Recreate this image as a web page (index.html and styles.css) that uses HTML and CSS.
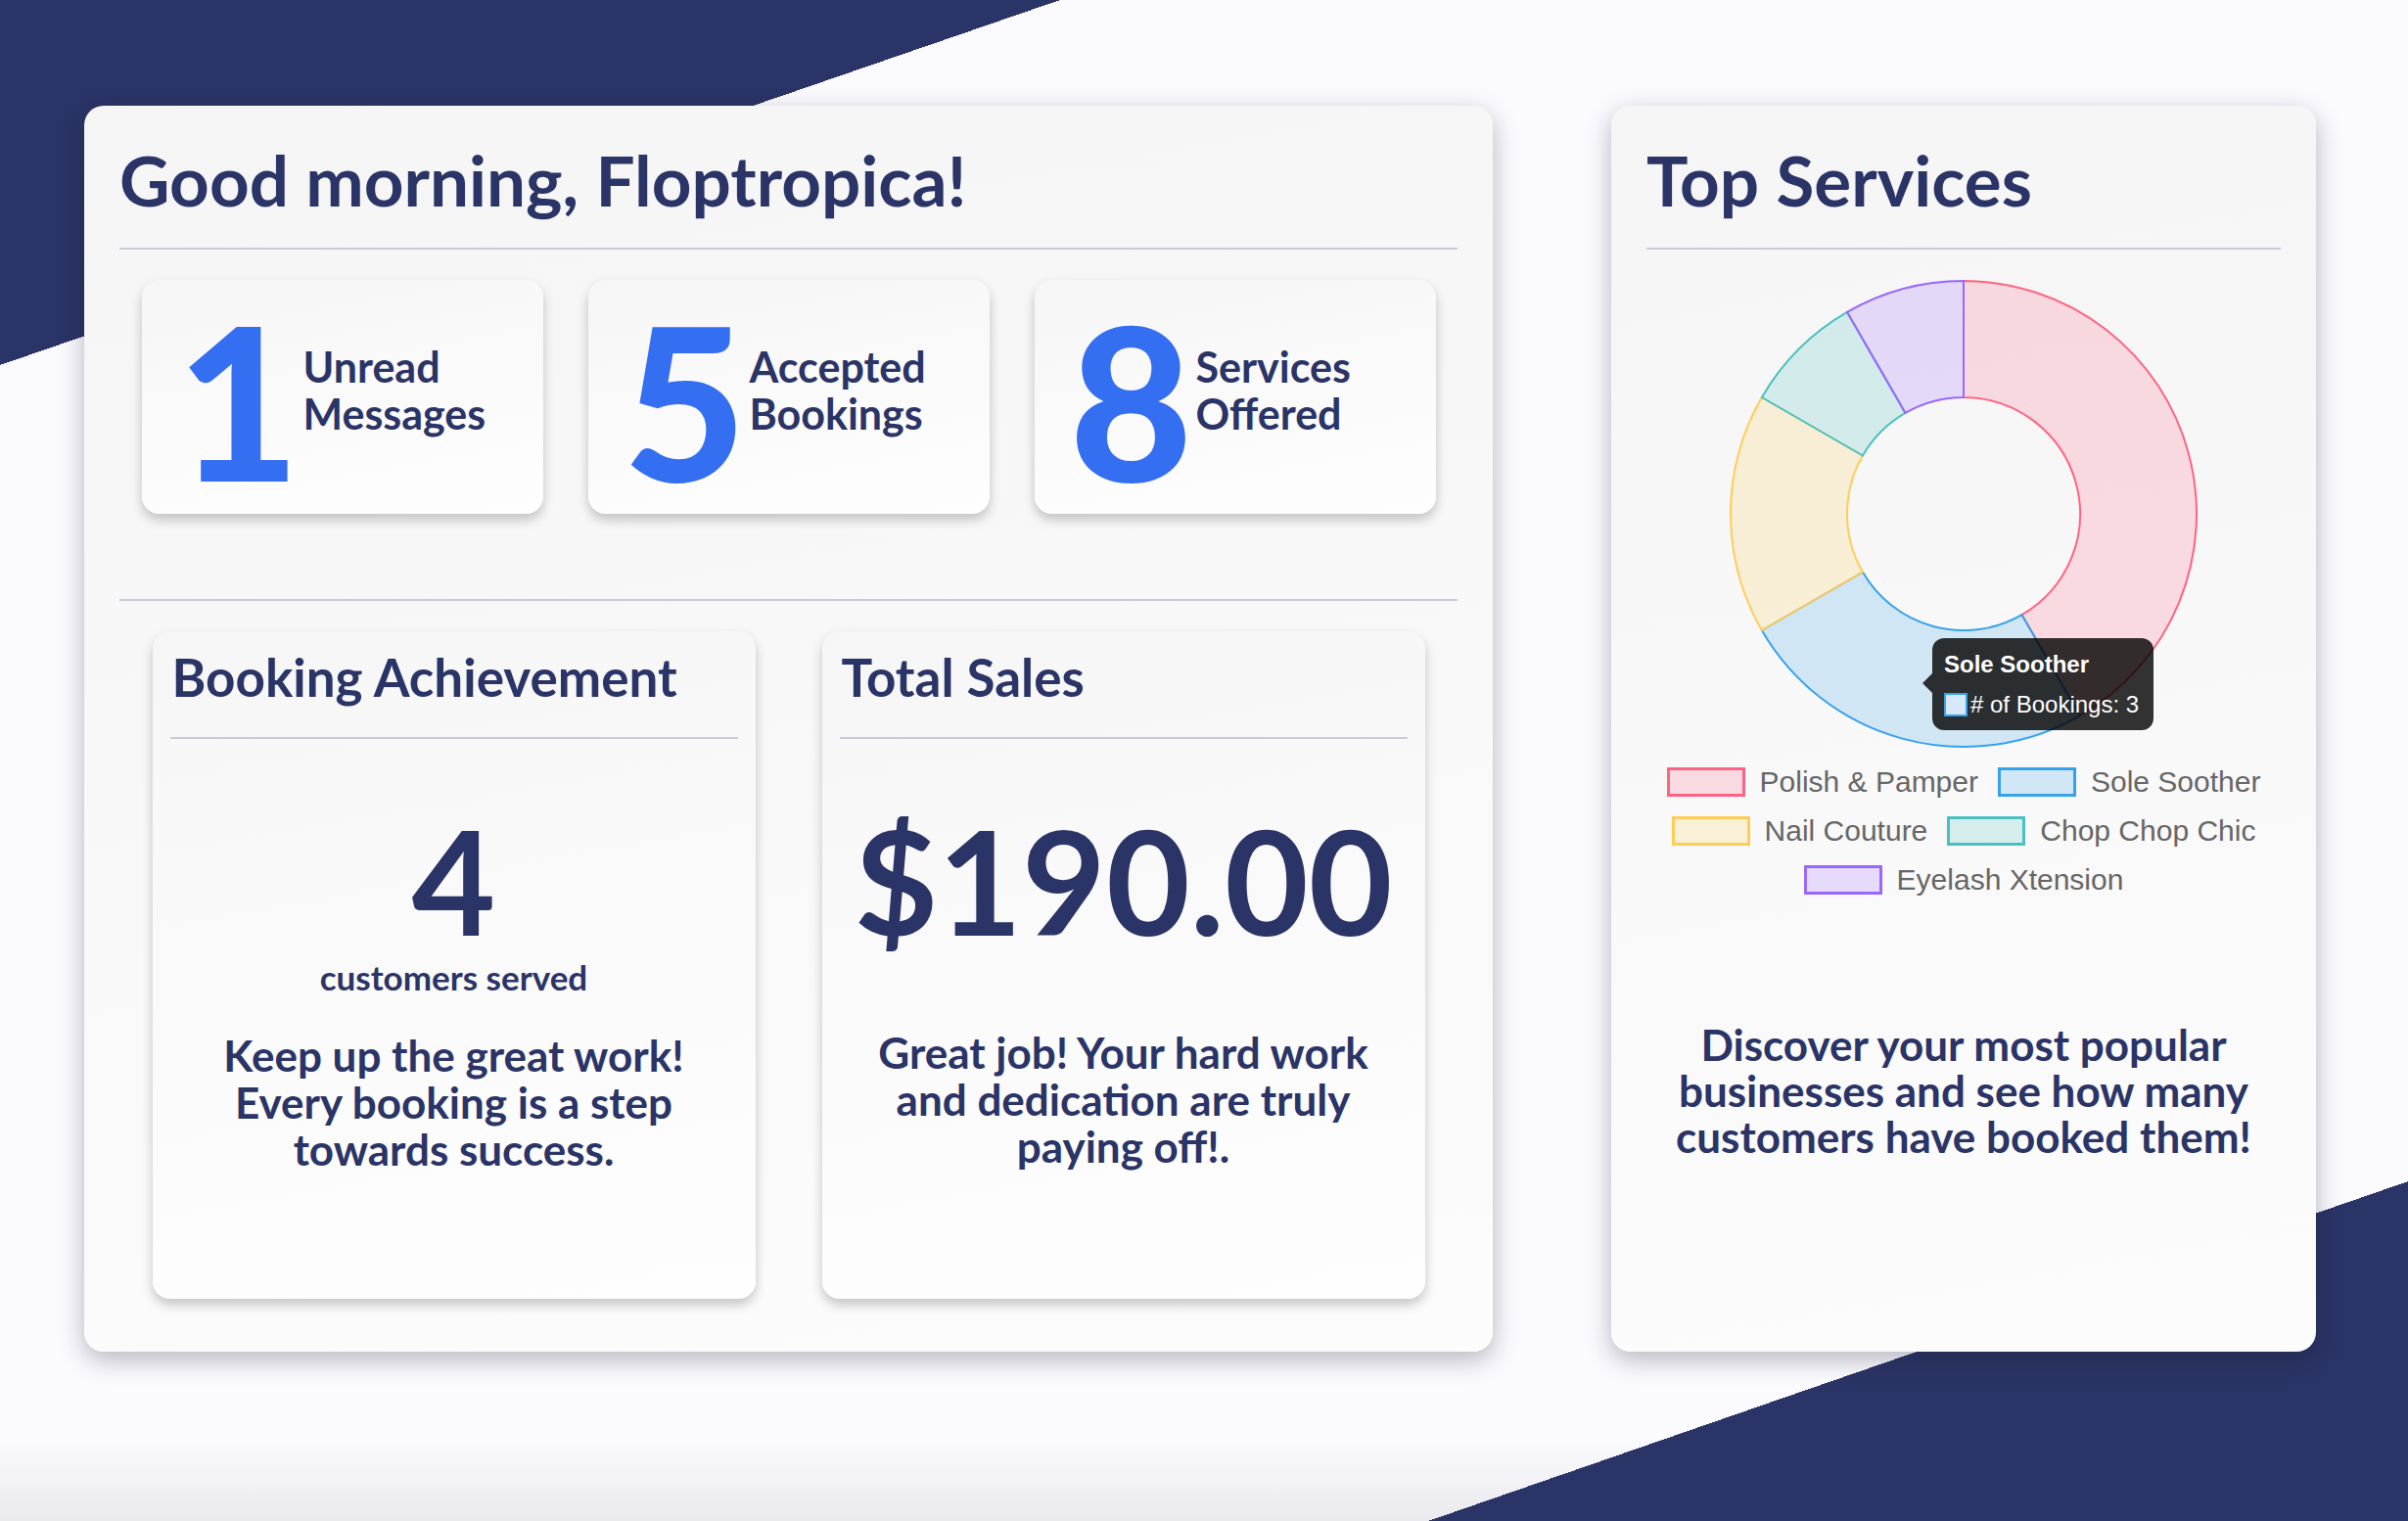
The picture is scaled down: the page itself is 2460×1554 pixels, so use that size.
FILE: index.html
```html
<!DOCTYPE html>
<html lang="en">
<head>
<meta charset="utf-8">
<title>Dashboard</title>
<link rel="stylesheet" href="styles.css">
</head>
<body>
<div class="page">
  <section class="card main-card">
    <h1 class="card-title">Good morning, Floptropica!</h1>
    <hr class="rule">
    <div class="stats">
      <div class="stat"><span class="stat-num">1</span><span class="stat-label">Unread<br>Messages</span></div>
      <div class="stat"><span class="stat-num">5</span><span class="stat-label">Accepted<br>Bookings</span></div>
      <div class="stat"><span class="stat-num">8</span><span class="stat-label">Services<br>Offered</span></div>
    </div>
    <hr class="rule rule-lower">
    <div class="panels">
      <div class="panel">
        <h2 class="panel-title">Booking Achievement</h2>
        <hr class="panel-rule">
        <div class="panel-num">4</div>
        <div class="panel-sub">customers served</div>
        <p class="panel-text">Keep up the great work!<br>Every booking is a step<br>towards success.</p>
      </div>
      <div class="panel">
        <h2 class="panel-title">Total Sales</h2>
        <hr class="panel-rule">
        <div class="panel-num">$190.00</div>
        <p class="panel-text panel-text-sales">Great job! Your hard work<br>and dedication are truly<br>paying off!.</p>
      </div>
    </div>
  </section>
  <section class="card side-card">
    <h1 class="card-title">Top Services</h1>
    <hr class="rule">
    <div class="chart">
      <svg viewBox="0 0 648 482" width="648" height="482">
        <path class="seg seg-red" d="M324,2 A238,238 0 0 1 443,446.11 L383.5,343.06 A119,119 0 0 0 324,121 Z"/>
        <path class="seg seg-blue" d="M443,446.11 A238,238 0 0 1 117.89,359 L220.94,299.5 A119,119 0 0 0 383.5,343.06 Z"/>
        <path class="seg seg-yellow" d="M117.89,359 A238,238 0 0 1 117.89,121 L220.94,180.5 A119,119 0 0 0 220.94,299.5 Z"/>
        <path class="seg seg-teal" d="M117.89,121 A238,238 0 0 1 205,33.89 L264.5,136.94 A119,119 0 0 0 220.94,180.5 Z"/>
        <path class="seg seg-purple" d="M205,33.89 A238,238 0 0 1 324,2 L324,121 A119,119 0 0 0 264.5,136.94 Z"/>
      </svg>
      <div class="tooltip">
        <div class="tooltip-title">Sole Soother</div>
        <div class="tooltip-body"><span class="tooltip-key"></span><span># of Bookings: 3</span></div>
      </div>
    </div>
    <div class="legend">
      <div class="legend-item"><span class="swatch sw-red"></span>Polish &amp; Pamper</div>
      <div class="legend-item"><span class="swatch sw-blue"></span>Sole Soother</div>
      <div class="legend-item"><span class="swatch sw-yellow"></span>Nail Couture</div>
      <div class="legend-item"><span class="swatch sw-teal"></span>Chop Chop Chic</div>
      <div class="legend-item"><span class="swatch sw-purple"></span>Eyelash Xtension</div>
    </div>
    <p class="side-text">Discover your most popular<br>businesses and see how many<br>customers have booked them!</p>
  </section>
</div>
</body>
</html>
```
FILE: styles.css
```css
* { box-sizing: border-box; }

html, body { margin: 0; padding: 0; }

body {
  width: 2460px;
  height: 1554px;
  overflow: hidden;
  font-family: Lato, "Noto Sans", sans-serif;
  color: #2b3466;
  background:
    linear-gradient(to bottom right, #2b3466 50%, transparent 50%) left top / 1083px 373px no-repeat,
    linear-gradient(to top left, #2b3466 50%, transparent 50%) right bottom / 1001px 347px no-repeat,
    linear-gradient(to bottom, #fbfaff 0, #fbfaff 1470px, #eae9ee 1554px) left top / 100% 100% no-repeat;
  background-color: #fbfaff;
}

.page {
  display: flex;
  align-items: flex-start;
  gap: 121px;
  padding: 108px 0 0 86px;
}

.card {
  height: 1273px;
  padding: 40px 36px 0;
  border-radius: 20px;
  background: linear-gradient(170deg, #f5f5f5 0%, #f9f9f9 60%, #fcfcfc 100%);
  box-shadow: 0 8px 26px rgba(20, 22, 40, 0.3);
}

.main-card { width: 1439px; }
.side-card { width: 720px; }

.card-title {
  margin: 0;
  font-size: 71px;
  line-height: 71px;
  font-weight: 700;
}

.rule {
  border: 0;
  height: 2px;
  margin: 34px 0 0;
  background: #c8cad8;
}

.stats {
  display: flex;
  justify-content: center;
  gap: 46px;
  margin-top: 31px;
}

.stat {
  width: 410px;
  height: 239px;
  display: flex;
  align-items: flex-start;
  padding: 32px 0 0 36px;
  border-radius: 18px;
  background: linear-gradient(170deg, #f6f6f6, #fefefe);
  box-shadow: 0 6px 12px rgba(0, 0, 0, 0.22);
}

.stat-num {
  width: 129px;
  font-size: 217px;
  line-height: 180px;
  font-weight: 900;
  color: #346ef1;
}

.stat-label {
  margin-top: 33px;
  font-size: 43px;
  line-height: 48px;
  font-weight: 700;
}

.rule-lower { margin-top: 87px; }

.panels {
  display: flex;
  justify-content: center;
  gap: 68px;
  margin-top: 31px;
}

.panel {
  width: 616px;
  height: 682px;
  padding: 16px 18px 0;
  border-radius: 18px;
  text-align: center;
  background: linear-gradient(170deg, #f6f6f6, #fefefe);
  box-shadow: 0 6px 12px rgba(0, 0, 0, 0.22);
}

.panel-title {
  margin: 0 0 0 2px;
  text-align: left;
  font-size: 53px;
  line-height: 62px;
  font-weight: 700;
}

.panel-rule {
  border: 0;
  height: 2px;
  margin: 30px 0 0;
  background: #c8cad8;
}

.panel-num {
  margin-top: 71px;
  font-size: 148px;
  line-height: 146px;
  font-weight: 700;
}

.panel-sub {
  margin-top: 4px;
  font-size: 35px;
  line-height: 44px;
  font-weight: 700;
}

.panel-text {
  margin: 34px 0 0;
  font-size: 44px;
  line-height: 48px;
  font-weight: 700;
}

.panel-text-sales { margin-top: 79px; }

.chart {
  position: relative;
  height: 482px;
  margin-top: 30px;
}

.chart svg { display: block; }

.seg { stroke-width: 2; }
.seg-red { fill: rgba(255, 99, 132, 0.2); stroke: rgb(255, 99, 132); }
.seg-blue { fill: rgba(54, 162, 235, 0.2); stroke: rgb(54, 162, 235); }
.seg-yellow { fill: rgba(255, 205, 86, 0.2); stroke: rgb(255, 205, 86); }
.seg-teal { fill: rgba(75, 192, 192, 0.2); stroke: rgb(75, 192, 192); }
.seg-purple { fill: rgba(153, 102, 255, 0.2); stroke: rgb(153, 102, 255); }

.tooltip {
  position: absolute;
  left: 292px;
  top: 367px;
  width: 226px;
  padding: 12px;
  border-radius: 12px;
  background: rgba(0, 0, 0, 0.8);
  color: #fff;
  font-family: "Liberation Sans", Arial, sans-serif;
  font-size: 24px;
}

.tooltip::before {
  content: "";
  position: absolute;
  left: -10px;
  top: 36px;
  border-style: solid;
  border-width: 10px 10px 10px 0;
  border-color: transparent rgba(0, 0, 0, 0.8) transparent transparent;
}

.tooltip-title {
  line-height: 29px;
  font-weight: 700;
  margin-bottom: 12px;
}

.tooltip-body {
  display: flex;
  align-items: center;
  gap: 3px;
  line-height: 29px;
}

.tooltip-key {
  width: 24px;
  height: 24px;
  border: 2px solid rgb(54, 162, 235);
  background: #d7e8fb;
}

.legend {
  display: flex;
  flex-wrap: wrap;
  justify-content: center;
  gap: 20px;
  margin-top: 17px;
  font-family: "Liberation Sans", Arial, sans-serif;
  font-size: 30px;
  color: #666;
}

.legend-item {
  display: flex;
  align-items: center;
  gap: 15px;
  height: 30px;
  line-height: 30px;
}

.swatch {
  width: 80px;
  height: 30px;
  border: 3px solid;
}

.sw-red { background: rgba(255, 99, 132, 0.2); border-color: rgb(255, 99, 132); }
.sw-blue { background: rgba(54, 162, 235, 0.2); border-color: rgb(54, 162, 235); }
.sw-yellow { background: rgba(255, 205, 86, 0.2); border-color: rgb(255, 205, 86); }
.sw-teal { background: rgba(75, 192, 192, 0.2); border-color: rgb(75, 192, 192); }
.sw-purple { background: rgba(153, 102, 255, 0.2); border-color: rgb(153, 102, 255); }

.side-text {
  margin: 130px 0 0;
  text-align: center;
  font-size: 44px;
  line-height: 47px;
  font-weight: 700;
}
```
